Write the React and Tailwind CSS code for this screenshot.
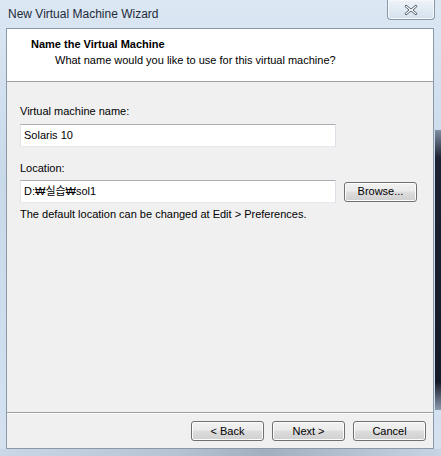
import React from 'react';

const font = { fontFamily: '"Liberation Sans", "Noto Sans CJK KR", sans-serif' };

function WinButton({ children, className = '' }) {
    return (
        <button
            className={`h-[20px] w-[73px] rounded-[3px] border border-[#707070] bg-[linear-gradient(#f2f2f2_0%,#ebebeb_45%,#dddddd_50%,#cfcfcf_100%)] text-[11px] leading-none text-black shadow-[inset_0_0_0_1px_#fcfcfc] ${className}`}
        >
            {children}
        </button>
    );
}

function TextBox({ value }) {
    return (
        <div className="h-[23px] w-[316px] border border-[#e3e9ef] border-t-[#abadb3] border-l-[#e2e3ea] border-r-[#dbdfe6] bg-white px-[3px] flex items-center text-[11px] text-black">
            {value}
        </div>
    );
}

export default function App() {
    return (
        <div className="w-[441px] h-[456px] overflow-hidden bg-[linear-gradient(180deg,#dbe7f3_0%,#c8d9ea_40%,#d4e2f0_100%)] flex flex-col" style={font}>
            {/* title bar */}
            <div className="h-[28px] flex items-start justify-between pl-[8px] pr-[6px]">
                <span className="mt-[6px] text-[12px] leading-[16px] text-[#1e2b3a]">New Virtual Machine Wizard</span>
                <div className="w-[48px] h-[20px] rounded-b-[4px] border border-t-0 border-[#8a97a6] bg-[linear-gradient(#eef3f9,#d5e1ee)] flex items-center justify-center shadow-[inset_0_0_0_1px_#f6f9fc]">
                    <svg width="14" height="12" viewBox="0 0 14 12">
                        <path d="M2 1 L7 5 L12 1 L13 2.5 L9 6 L13 9.5 L12 11 L7 7 L2 11 L1 9.5 L5 6 L1 2.5 Z" fill="#fafbfd" stroke="#55606e" strokeWidth="1" strokeLinejoin="round" />
                    </svg>
                </div>
            </div>

            <div className="flex flex-1">
                <div className="w-[6px]" />

                {/* client panel */}
                <div className="w-[428px] h-[421px] border border-[#8b98a7] flex flex-col bg-[#f0f0f0]">
                    <div className="h-[53px] bg-white border-b border-[#a0a0a0] pl-[24px] pt-[8px]">
                        <div className="text-[11px] font-bold leading-[14px] text-black">Name the Virtual Machine</div>
                        <div className="mt-[2px] pl-[24px] text-[11px] leading-[14px] text-black">What name would you like to use for this virtual machine?</div>
                    </div>

                    <div className="flex-1 px-[13px] pt-[22px] text-[11px] text-black">
                        <div className="leading-[14px]">Virtual machine name:</div>
                        <div className="mt-[6px]">
                            <TextBox value="Solaris 10" />
                        </div>
                        <div className="mt-[14px] leading-[14px]">Location:</div>
                        <div className="mt-[5px] flex items-center gap-[8px]">
                            <TextBox value="D:₩실습₩sol1" />
                            <WinButton>Browse...</WinButton>
                        </div>
                        <div className="mt-[4px] leading-[14px]">The default location can be changed at Edit &gt; Preferences.</div>
                    </div>

                    <div className="h-[36px] border-t border-[#a0a0a0] shadow-[inset_0_1px_0_#ffffff] flex justify-end items-start gap-[8px] pt-[8px] pr-[7px]">
                        <WinButton>&lt; Back</WinButton>
                        <WinButton>Next &gt;</WinButton>
                        <WinButton>Cancel</WinButton>
                    </div>
                </div>

                {/* right frame edge with desktop showing through */}
                <div className="w-[7px] flex flex-col">
                    <div className="h-[102px]" />
                    <div className="ml-[1px] h-[280px] bg-[linear-gradient(180deg,#7f8ea3_0%,#1c2233_10%,#151a28_90%,#8c9aae_100%)]" />
                    <div className="flex-1" />
                </div>
            </div>

            <div className="h-[7px] bg-[linear-gradient(90deg,#c9d7e6_0%,#b5c3d3_40%,#a2afbf_60%,#c6d4e3_100%)]" />
        </div>
    );
}
